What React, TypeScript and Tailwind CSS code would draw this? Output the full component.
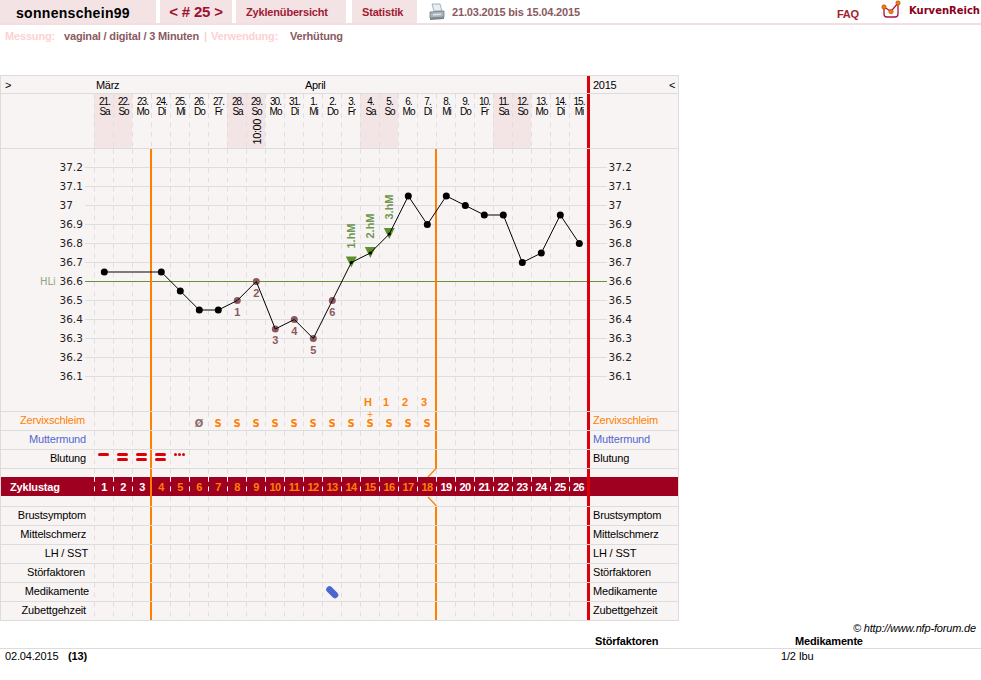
import React from 'react';

const days = [
  ['21.', 'Sa'], ['22.', 'So'], ['23.', 'Mo'], ['24.', 'Di'], ['25.', 'Mi'], ['26.', 'Do'], ['27.', 'Fr'],
  ['28.', 'Sa'], ['29.', 'So'], ['30.', 'Mo'], ['31.', 'Di'], ['1.', 'Mi'], ['2.', 'Do'], ['3.', 'Fr'],
  ['4.', 'Sa'], ['5.', 'So'], ['6.', 'Mo'], ['7.', 'Di'], ['8.', 'Mi'], ['9.', 'Do'], ['10.', 'Fr'],
  ['11.', 'Sa'], ['12.', 'So'], ['13.', 'Mo'], ['14.', 'Di'], ['15.', 'Mi'],
];

// [day index, temperature]
const temps: [number, number][] = [
  [0, 36.65], [3, 36.65], [4, 36.55], [5, 36.45], [6, 36.45], [7, 36.5], [8, 36.6], [9, 36.35], [10, 36.4],
  [11, 36.3], [12, 36.5], [13, 36.7], [14, 36.75], [15, 36.85], [16, 37.05], [17, 36.9], [18, 37.05],
  [19, 37], [20, 36.95], [21, 36.95], [22, 36.7], [23, 36.75], [24, 36.95], [25, 36.8],
];

const scale = ['37.2', '37.1', '37', '36.9', '36.8', '36.7', '36.6', '36.5', '36.4', '36.3', '36.2', '36.1'];

const px = (i: number) => 104.3 + i * 19;
const py = (t: number) => 167.5 + (37.2 - t) * 190;

const dashGrey = 'bg-[linear-gradient(#dfdfdf_50%,transparent_50%)] bg-[length:1px_9.5px] bg-repeat-y';
const dashWhite = 'bg-[linear-gradient(#ffffff_50%,transparent_50%)] bg-[length:1px_9.5px] bg-repeat-y';

function Days({
  orange = [3, 18],
  dash = dashGrey,
  tint,
  render,
}: {
  orange?: number[];
  dash?: string;
  tint?: (i: number) => string;
  render?: (i: number) => React.ReactNode;
}) {
  return (
    <div className="flex w-[493px] shrink-0">
      {days.map((_, i) => (
        <div
          key={i}
          className={`relative h-full shrink-0 ${i === 25 ? 'w-[18px]' : 'w-[19px]'} ${dash} ${tint ? tint(i) : ''}`}
        >
          {orange.includes(i) && <div className="absolute inset-y-0 left-[-1px] w-[2px] bg-[#ff8000]" />}
          {render && render(i)}
        </div>
      ))}
    </div>
  );
}

function Side({ children, className = '' }: { children?: React.ReactNode; className?: string }) {
  return (
    <div className={`flex w-[91px] shrink-0 items-center border-l-[3px] border-[#dc0008] pl-[3px] ${className}`}>
      {children}
    </div>
  );
}

function Row({
  label,
  color = 'text-black',
  shift = 'pr-[8px]',
  render,
}: {
  label: string;
  color?: string;
  shift?: string;
  render?: (i: number) => React.ReactNode;
}) {
  return (
    <div className="flex h-[19px] border-b border-[#dcdcdc]">
      <div className={`flex w-[93px] shrink-0 items-center justify-end pb-[2px] ${shift} ${color}`}>{label}</div>
      <Days render={render} />
      <Side className={`pb-[2px] ${color}`}>{label}</Side>
    </div>
  );
}

function Chart() {
  const line = temps.map(([i, t]) => `${px(i)},${py(t)}`).join(' ');
  const hm: [number, number, string][] = [
    [13, 236, '1.hM'],
    [14, 226, '2.hM'],
    [15, 207, '3.hM'],
  ];
  return (
    <svg viewBox="1 149 677 262" width={677} height={262} className="absolute left-0 top-0 tracking-normal">
      {scale.map((s, n) => {
        const y = 167.5 + n * 19;
        const col = s === '36.6' ? '#6b8f3f' : '#dedede';
        return (
          <g key={s}>
            <line x1={85} x2={587} y1={y} y2={y} stroke={col} />
            <line x1={590} x2={607} y1={y} y2={y} stroke={col} />
            <text x={59.5} y={y + 3} fontSize={10.5} fontFamily="'DejaVu Sans', sans-serif" fill="#222">{s}</text>
            <text x={608.5} y={y + 3} fontSize={10.5} fontFamily="'DejaVu Sans', sans-serif" fill="#222">{s}</text>
          </g>
        );
      })}
      <text x={40} y={285} fontSize={10} fontFamily="'DejaVu Sans', sans-serif" fill="#8fa880">HLi</text>
      <rect x={150} y={149} width={2} height={262} fill="#ff8000" />
      <rect x={435} y={149} width={2} height={262} fill="#ff8000" />

      {temps.map(([i, t]) =>
        i >= 13 && i <= 15 ? (
          <polygon
            key={i}
            points={`${px(i) - 5.5},${py(t) - 6} ${px(i) + 5.5},${py(t) - 6} ${px(i)},${py(t) + 5}`}
            fill="#5f8f2c"
          />
        ) : (
          <circle key={i} cx={px(i)} cy={py(t)} r={3.5} fill={i >= 7 && i <= 12 ? '#8a5a60' : '#000'} />
        )
      )}
      <polyline points={line} fill="none" stroke="#000" strokeWidth={1} />
      {[13, 14, 15].map((i) => {
        const t = temps.find((p) => p[0] === i)![1];
        return <circle key={i} cx={px(i)} cy={py(t)} r={1.6} fill="#000" />;
      })}

      {[[7, '1'], [8, '2'], [9, '3'], [10, '4'], [11, '5'], [12, '6']].map(([i, n]) => {
        const t = temps.find((p) => p[0] === i)![1];
        return (
          <text
            key={n as string}
            x={px(i as number)}
            y={py(t) + 15}
            fontSize={11}
            fontWeight={700}
            textAnchor="middle"
            fontFamily="'Liberation Sans', sans-serif"
            fill="#8a5a60"
          >
            {n}
          </text>
        );
      })}

      {hm.map(([i, y, txt]) => (
        <text
          key={txt}
          transform={`translate(${px(i) + 3.5},${y}) rotate(-90)`}
          fontSize={11}
          fontWeight={700}
          textAnchor="middle"
          fontFamily="'Liberation Sans', sans-serif"
          fill="#6f9650"
        >
          {txt}
        </text>
      ))}

      {[[368, 'H'], [386, '1'], [405, '2'], [424, '3']].map(([x, c]) => (
        <text
          key={c as string}
          x={x as number}
          y={406}
          fontSize={11}
          fontWeight={700}
          textAnchor="middle"
          fontFamily="'Liberation Sans', sans-serif"
          fill="#ff8000"
        >
          {c}
        </text>
      ))}
    </svg>
  );
}

function Printer() {
  return (
    <svg width="16" height="18" viewBox="0 0 16 18">
      <path d="M3 1 L11 1 L13 8 L5 8 Z" fill="#e8eef2" stroke="#8fa0ac" strokeWidth="0.8" />
      <path d="M1 9 L15 8 L15 14 L1 15 Z" fill="#a9b4bb" stroke="#6f7c85" strokeWidth="0.8" />
      <path d="M1 15 L15 14 L15 16 L1 17 Z" fill="#77838b" />
      <path d="M4 11 L12 10.5 L12 12 L4 12.5 Z" fill="#dfe5e9" />
    </svg>
  );
}

function Logo() {
  return (
    <svg width="22" height="20" viewBox="0 0 22 20">
      <path d="M0 13 H22 M11 2 V19" stroke="#eeeeee" strokeWidth="1" />
      <path d="M3 8 V14 Q3 17 6 17 H14 Q17 17 17 14 V5" fill="none" stroke="#b01040" strokeWidth="1.3" />
      <path d="M3 7 L10 11.5 L17 3" fill="none" stroke="#b01040" strokeWidth="1.3" />
      <circle cx="3" cy="7" r="2.2" fill="#f08000" stroke="#a03000" strokeWidth="0.5" />
      <circle cx="10" cy="11.5" r="2.2" fill="#f08000" stroke="#a03000" strokeWidth="0.5" />
      <circle cx="17" cy="3" r="2.2" fill="#f08000" stroke="#a03000" strokeWidth="0.5" />
    </svg>
  );
}

export default function App() {
  return (
    <div className="h-[680px] w-[981px] overflow-hidden bg-white font-['Liberation_Sans',Arial,sans-serif] text-[11px] tracking-[-0.17px] text-black">
      {/* top navigation */}
      <div className="flex h-[25px] items-start border-b-2 border-[#f3dfe2]">
        <div className="flex h-[23px] w-[156px] items-center bg-[#f3e3e5] pl-4 pt-[3px] text-[14px] font-bold tracking-[0.3px]">sonnenschein99</div>
        <div className="ml-1 flex h-[23px] w-[72px] items-center justify-center bg-[#f3e3e5] pt-[2px] text-[15px] font-bold tracking-[-0.2px] text-[#a01030]">
          &lt; # 25 &gt;
        </div>
        <div className="ml-1 flex h-[23px] w-[110px] items-center bg-[#f3e3e5] pl-[10px] pt-[2px] font-bold text-[#a01a32]">Zyklenübersicht</div>
        <div className="ml-[6px] flex h-[23px] w-[65px] items-center bg-[#f3e3e5] pl-[10px] pt-[2px] font-bold text-[#a01a32]">Statistik</div>
        <div className="ml-[12px] mt-[3px]"><Printer /></div>
        <div className="ml-[7px] flex h-[23px] items-center pt-[2px] font-bold text-[#8a5a60]">21.03.2015 bis 15.04.2015</div>
        <div className="ml-auto mt-[6px] font-bold text-[#a02030]">FAQ</div>
        <div className="ml-[22px]"><Logo /></div>
        <div className="ml-[6px] mr-px mt-[3px] font-['DejaVu_Sans',sans-serif] text-[10px] font-bold tracking-normal text-[#8a0020]">KurvenReich</div>
      </div>

      <div className="flex h-[50px] pl-[5px] pt-[5px] font-bold leading-[13px]">
        <span className="w-[59px] text-[#fcd2d2]">Messung:</span>
        <span className="text-[#8a5a60]">vaginal / digital / 3 Minuten</span>
        <span className="ml-[5px] text-[#fcd2d2]">|</span>
        <span className="ml-[4px] w-[79px] text-[#fcd2d2]">Verwendung:</span>
        <span className="text-[#8a5a60]">Verhütung</span>
      </div>

      {/* chart table */}
      <div className="w-[679px] border-x border-t border-[#dcdcdc] bg-[#f9f4f4]">
        <div className="flex h-[18px] border-b border-[#dcdcdc] leading-[19px] tracking-[-0.3px]">
          <div className="w-[93px] shrink-0 pl-1">&gt;</div>
          <div className="flex w-[493px] shrink-0 pl-[2px]">
            <span className="w-[209px]">März</span>
            <span>April</span>
          </div>
          <Side className="justify-between pr-[3px] pt-px">
            <span>2015</span>
            <span>&lt;</span>
          </Side>
        </div>

        <div className="flex h-[55px] border-b border-[#dcdcdc]">
          <div className="w-[93px] shrink-0" />
          <Days
            orange={[]}
            tint={(i) => ([0, 1, 7, 8, 14, 15, 21, 22].includes(i) ? 'bg-[#f3e4e6]' : '')}
            render={(i) => (
              <div className="flex flex-col items-center pl-[2px] pt-[3px] text-[10px] leading-[10px] tracking-[-1px]">
                <span>{days[i][0]}</span>
                <span>{days[i][1]}</span>
                {i === 8 && <span className="mt-[2px] rotate-180 text-[11px] tracking-[-0.4px] [writing-mode:vertical-rl]">10:00</span>}
              </div>
            )}
          />
          <Side />
        </div>

        <div className="relative flex h-[263px] border-b border-[#dcdcdc]">
          <div className="w-[93px] shrink-0" />
          <Days orange={[]} />
          <Side />
          <Chart />
        </div>

        <Row
          label="Zervixschleim"
          color="text-[#ff8000]"
          shift="pr-[9px]"
          render={(i) => {
            if (i === 5)
              return <div className="pl-[1px] pt-[4px] text-center font-['DejaVu_Sans',sans-serif] text-[10px] font-bold text-[#8a6a6a]">Ø</div>;
            if (i >= 6 && i <= 17)
              return (
                <div className="pl-[1px] pt-[4px] text-center font-['DejaVu_Sans',sans-serif] text-[10px] font-bold text-[#ff8000]">
                  {i === 14 && <span className="absolute left-0 top-[-1px] w-full pl-[1px] text-[8px] font-normal leading-[8px]">+</span>}
                  S
                </div>
              );
            return null;
          }}
        />
        <Row label="Muttermund" color="text-[#5069d2]" />
        <Row
          label="Blutung"
          render={(i) => {
            if (i === 0)
              return <div className="mx-auto mt-[3px] h-[3px] w-[11px] rounded-full bg-[#dc0008]" />;
            if (i >= 1 && i <= 3)
              return (
                <div className="mt-[3px] flex flex-col items-center gap-[2px]">
                  <div className="h-[3px] w-[11px] rounded-full bg-[#dc0008]" />
                  <div className="h-[3px] w-[11px] rounded-full bg-[#dc0008]" />
                </div>
              );
            if (i === 4)
              return (
                <div className="mt-[3px] flex justify-center gap-px">
                  <div className="size-[3px] rounded-full bg-[#dc0008]" />
                  <div className="size-[3px] rounded-full bg-[#dc0008]" />
                  <div className="size-[3px] rounded-full bg-[#dc0008]" />
                </div>
              );
            return null;
          }}
        />

        <div className="flex h-[8px]">
          <div className="w-[93px] shrink-0" />
          <Days
            orange={[3]}
            render={(i) =>
              i === 17 ? (
                <svg width="10" height="9" className="absolute left-[10px] top-[-1px]">
                  <line x1="9.5" y1="0" x2="1" y2="9" stroke="#ff8000" strokeWidth="1.3" />
                </svg>
              ) : null
            }
          />
          <Side />
        </div>

        <div className="flex h-[19px] bg-[#a00020] font-bold">
          <div className="flex w-[93px] shrink-0 items-center pl-[9px] pt-px text-white">Zyklustag</div>
          <Days
            orange={[3]}
            dash={dashWhite}
            render={(i) => (
              <div className={`flex h-full items-center justify-center pl-px pt-px ${i >= 3 && i <= 17 ? 'text-[#ff8000]' : 'text-white'} tracking-[-0.5px]`}>
                {i + 1}
              </div>
            )}
          />
          <Side />
        </div>

        <div className="flex h-[11px] border-b border-[#dcdcdc]">
          <div className="w-[93px] shrink-0" />
          <Days
            orange={[3]}
            render={(i) =>
              i === 17 ? (
                <svg width="10" height="10" className="absolute left-[10px] top-0">
                  <line x1="1" y1="1" x2="9.5" y2="10" stroke="#ff8000" strokeWidth="1.3" />
                </svg>
              ) : null
            }
          />
          <Side />
        </div>

        <Row label="Brustsymptom" />
        <Row label="Mittelschmerz" />
        <Row label="LH / SST" shift="pr-[6px]" />
        <Row label="Störfaktoren" shift="pr-[9px]" />
        <Row
          label="Medikamente"
          shift="pr-[5px]"
          render={(i) =>
            i === 12 ? (
              <svg width="14" height="14" className="absolute left-[3px] top-[2px]">
                <line x1="4.5" y1="4.5" x2="10" y2="10" stroke="#4a67d0" strokeWidth="6.5" strokeLinecap="round" />
              </svg>
            ) : null
          }
        />
        <Row label="Zubettgehzeit" />
      </div>

      {/* footer */}
      <div className="mt-px pr-[5px] text-right italic leading-[13px]">© http://www.nfp-forum.de</div>
      <div className="flex h-[14px] border-b border-[#dcdcdc] pl-[595px] font-bold leading-[13px]">
        <span className="w-[200px]">Störfaktoren</span>
        <span>Medikamente</span>
      </div>
      <div className="flex pl-[5px] leading-[14px]">
        <span className="w-[63px]">02.04.2015</span>
        <span className="w-[713px] font-bold">(13)</span>
        <span>1/2 Ibu</span>
      </div>
    </div>
  );
}
